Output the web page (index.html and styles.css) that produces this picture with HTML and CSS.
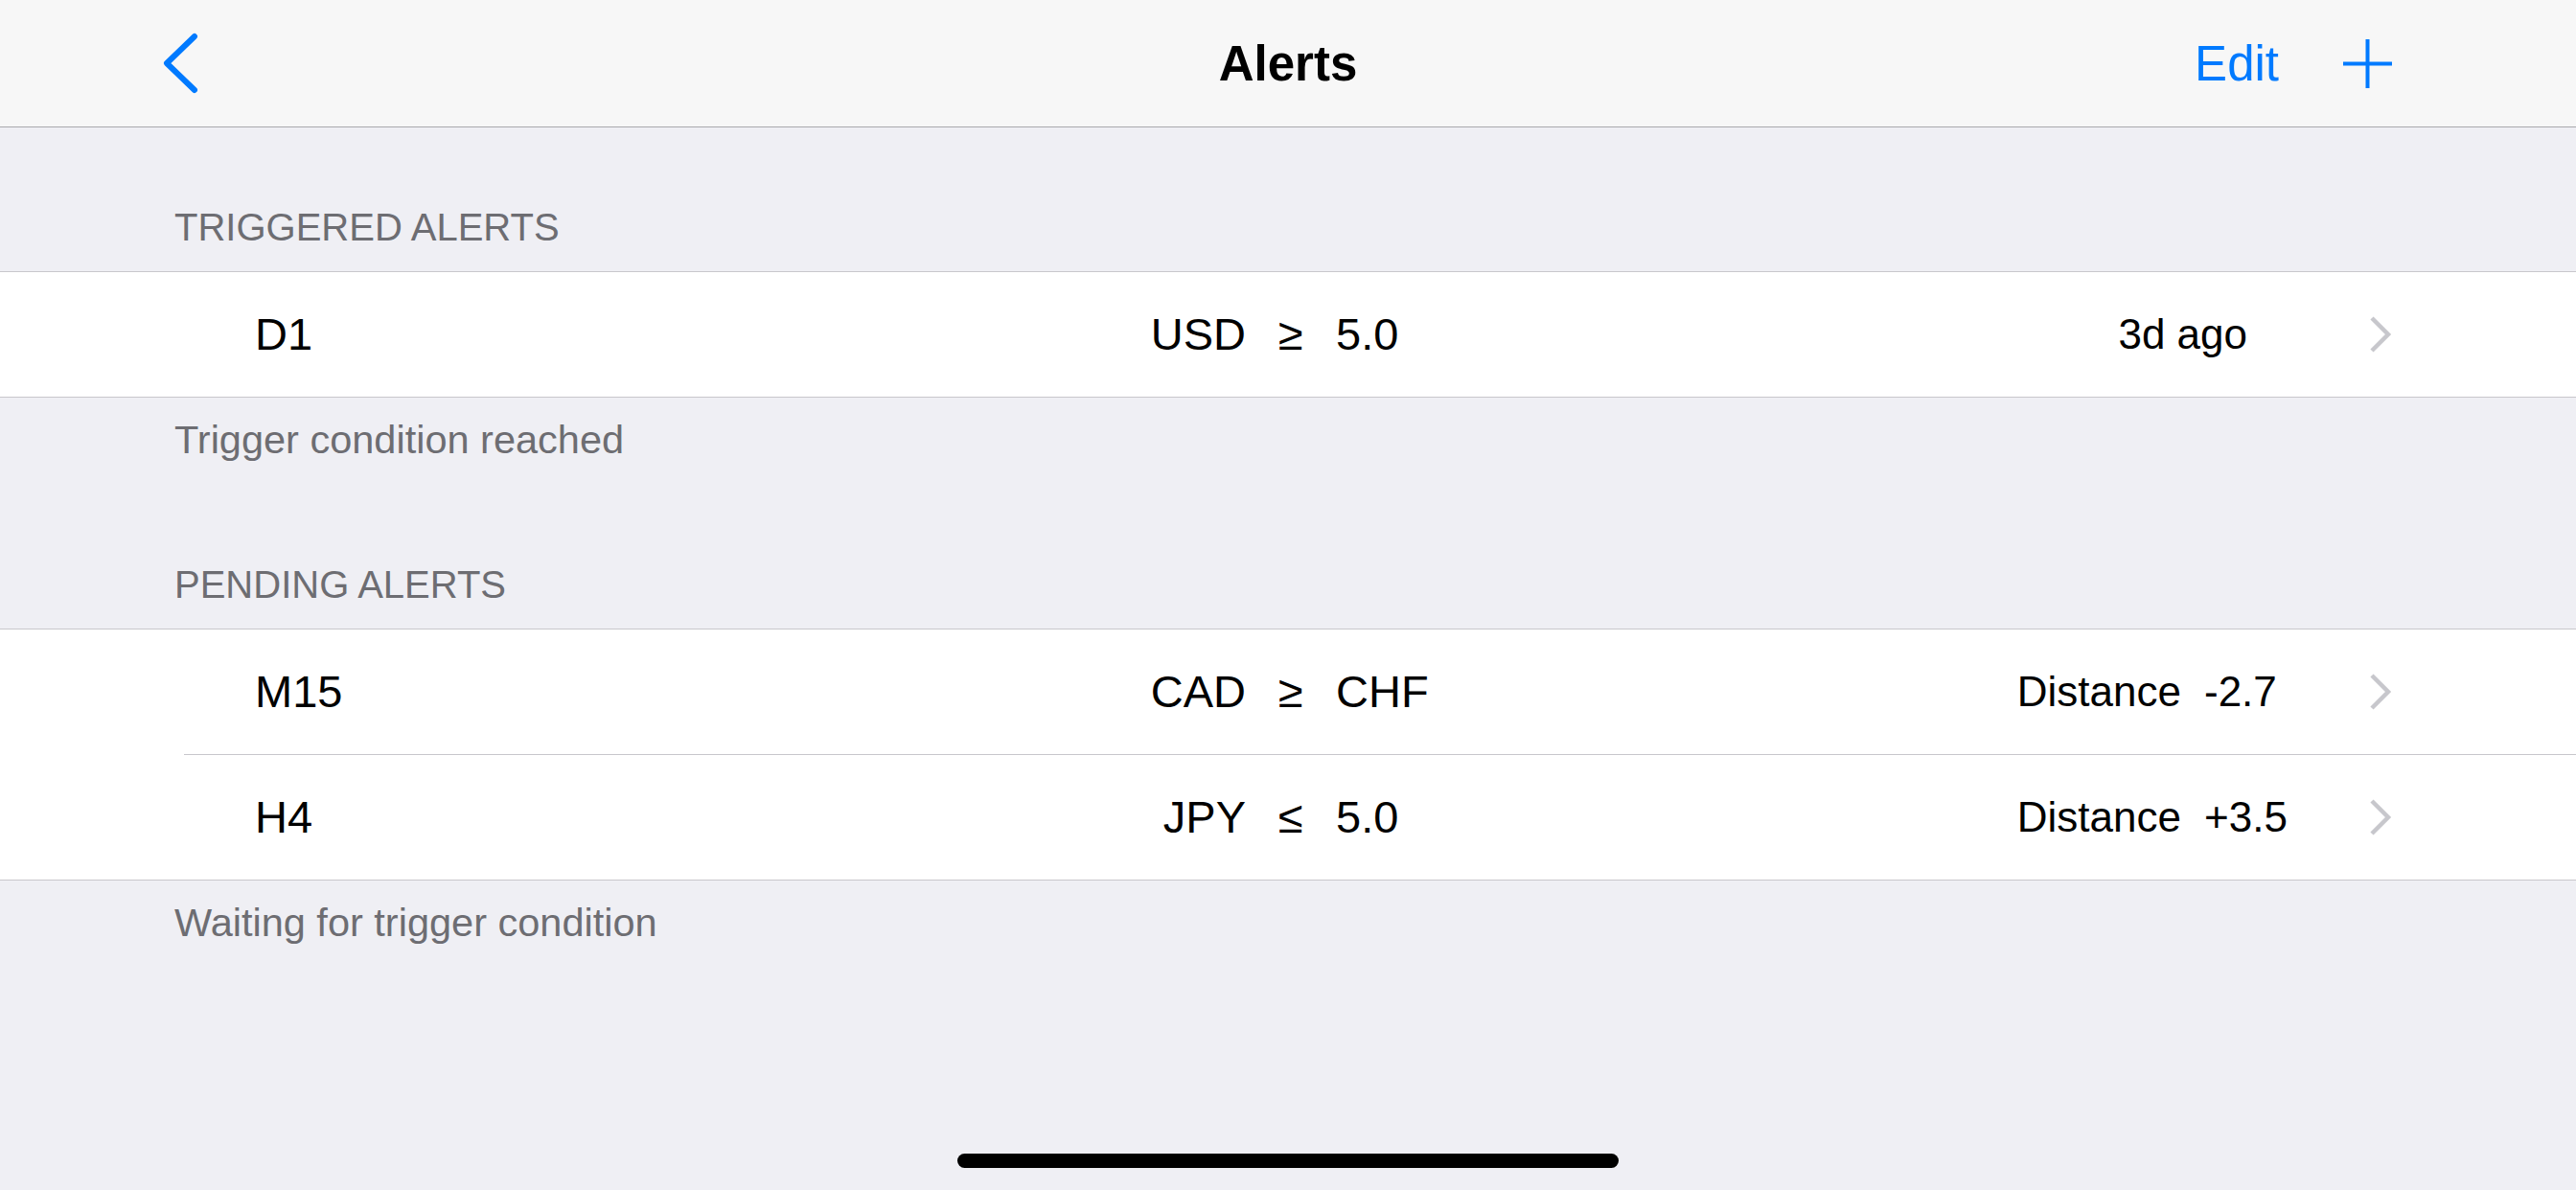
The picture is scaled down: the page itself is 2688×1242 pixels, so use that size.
FILE: index.html
```html
<!DOCTYPE html>
<html lang="en">

<head>
  <meta charset="UTF-8">
  <meta name="viewport" content="width=device-width, initial-scale=1">
  <title>Alerts</title>
  <link rel="stylesheet" href="styles.css">
</head>

<body>
  <header class="navbar">
    <div class="nav-left">
      <svg class="back-icon" width="40" height="64" viewBox="0 0 40 64">
        <polyline points="35,4 6,32 35,60" fill="none" stroke="#007aff" stroke-width="6" stroke-linecap="round" stroke-linejoin="round" />
      </svg>
    </div>
    <h1 class="nav-title">Alerts</h1>
    <div class="nav-right">
      <span class="nav-edit">Edit</span>
      <svg class="add-icon" width="51" height="51" viewBox="0 0 51 51">
        <line x1="25.5" y1="0" x2="25.5" y2="51" stroke="#007aff" stroke-width="4" />
        <line x1="0" y1="25.5" x2="51" y2="25.5" stroke="#007aff" stroke-width="4" />
      </svg>
    </div>
  </header>

  <main class="content">
    <section class="group">
      <div class="group-header">Triggered Alerts</div>
      <ul class="table">
        <li class="row">
          <span class="name">D1</span>
          <span class="lhs">USD</span>
          <span class="op">&ge;</span>
          <span class="rhs">5.0</span>
          <span class="info info-time">3d ago</span>
          <svg class="chevron" width="24" height="40" viewBox="0 0 24 40">
            <polyline points="3,3 20,20 3,37" fill="none" stroke="#c7c7cc" stroke-width="4.5" />
          </svg>
        </li>
      </ul>
      <div class="group-footer">Trigger condition reached</div>
    </section>

    <section class="group">
      <div class="group-header">Pending Alerts</div>
      <ul class="table">
        <li class="row">
          <span class="name">M15</span>
          <span class="lhs">CAD</span>
          <span class="op">&ge;</span>
          <span class="rhs">CHF</span>
          <span class="info"><span class="info-label">Distance</span><span class="info-value">-2.7</span></span>
          <svg class="chevron" width="24" height="40" viewBox="0 0 24 40">
            <polyline points="3,3 20,20 3,37" fill="none" stroke="#c7c7cc" stroke-width="4.5" />
          </svg>
        </li>
        <li class="row">
          <span class="name">H4</span>
          <span class="lhs">JPY</span>
          <span class="op">&le;</span>
          <span class="rhs">5.0</span>
          <span class="info"><span class="info-label">Distance</span><span class="info-value">+3.5</span></span>
          <svg class="chevron" width="24" height="40" viewBox="0 0 24 40">
            <polyline points="3,3 20,20 3,37" fill="none" stroke="#c7c7cc" stroke-width="4.5" />
          </svg>
        </li>
      </ul>
      <div class="group-footer">Waiting for trigger condition</div>
    </section>
  </main>

  <div class="home-indicator"></div>
</body>
</html>
```

FILE: styles.css
```css
body {
    margin: 0;
    padding: 0;
    width: 2688px;
    height: 1242px;
    overflow: hidden;
    font-family: "Liberation Sans", Arial, sans-serif;
    background-color: #efeff4; /* grouped table background */
    color: #000;
    display: flex;
    flex-direction: column;
}

/* navigation bar */
.navbar {
    height: 132px;
    border-bottom: 1px solid #a9a9ad;
    background-color: #f7f7f7;
    display: grid;
    grid-template-columns: 1fr auto 1fr;
    align-items: center;
    padding: 0 168px;
}

.nav-left {
    display: flex;
    align-items: center;
}

.back-icon {
    display: block;
}

.nav-title {
    margin: 0;
    font-size: 51px;
    font-weight: bold;
}

.nav-right {
    display: flex;
    align-items: center;
    justify-content: flex-end;
    padding-right: 24px;
}

.nav-edit {
    font-size: 51px;
    color: #007aff;
}

.add-icon {
    display: block;
    margin-left: 67px;
}

/* grouped sections */
.content {
    flex: 1;
}

.group-header {
    padding: 80px 182px 22px;
    font-size: 40px;
    line-height: 48px;
    color: #6d6d72;
    text-transform: uppercase;
}

.group-footer {
    padding: 20px 182px 23px;
    font-size: 41.5px;
    line-height: 48px;
    color: #6d6d72;
}

.table {
    list-style: none;
    margin: 0;
    padding: 0;
    background-color: #fff;
    border-top: 1px solid #c8c7cc;
    border-bottom: 1px solid #c8c7cc;
}

.row {
    height: 130px;
    padding: 0 192px 0 266px;
    display: grid;
    grid-template-columns: 934px 100px 94px 1fr auto 24px;
    align-items: center;
    font-size: 47px;
    line-height: 48px;
}

.row + .row {
    margin-left: 192px;
    padding-left: 74px;
    border-top: 1px solid #c8c7cc;
}

.lhs {
    text-align: right;
}

.op {
    text-align: center;
}

.rhs {
    text-align: left;
}

.info {
    display: flex;
    font-size: 44px;
    margin-right: 84px;
}

.info-time {
    margin-right: 127px;
}

.info-value {
    min-width: 88px;
    margin-left: 24px;
}

.chevron {
    display: block;
}

/* home indicator */
.home-indicator {
    width: 690px;
    height: 15px;
    border-radius: 8px;
    background-color: #000;
    margin: 0 auto 23px;
}
```
